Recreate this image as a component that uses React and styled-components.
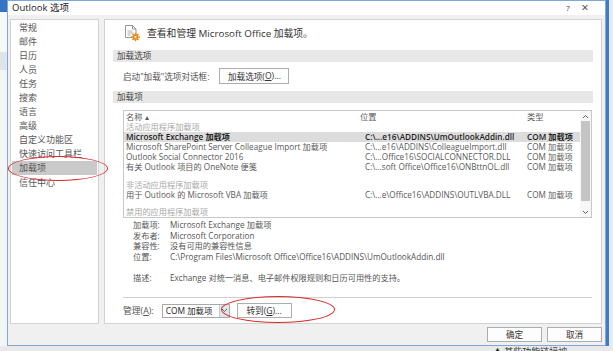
import React from "react";
import styled, { createGlobalStyle } from "styled-components";

const Global = createGlobalStyle`
  html, body { margin: 0; padding: 0; }
  body {
    width: 613px; height: 351px; overflow: hidden;
    font-family: "Open Sans", "Noto Sans CJK SC", sans-serif;
    color: #444; background: #e4e7eb;
  }
  * { box-sizing: border-box; }
`;

const Screen = styled.div`
  position: relative;
  width: 613px; height: 351px;
  display: flex; flex-direction: column;
  overflow: hidden;
`;

const Desk = styled.div`
  display: flex;
  height: 346px;
`;

const BgLeft = styled.div`
  width: 7px;
  display: flex; flex-direction: column;
  background: #f2f3f5;
`;

const BgBlue = styled.div`
  height: ${(p) => p.$h}px;
  background: ${(p) => p.$c || "#3474c4"};
`;

const BgRight = styled.div`
  flex: 1;
  display: flex;
  background: #e8ebee;
`;

const BgStripe = styled.div`
  width: 3px;
  background: #3f7cc8;
`;

const Dialog = styled.div`
  width: 599px;
  display: flex; flex-direction: column;
  background: #f0f0f0;
  border: 1px solid #7ea8d8;
`;

const TitleBar = styled.div`
  height: 14px;
  background: #fff;
  display: flex; align-items: center;
  padding: 0 10px 0 4px;
  font-size: 9.5px;
  color: #222;
`;

const Title = styled.span`
  flex: 1;
  line-height: 14px;
`;

const TitleBtn = styled.span`
  width: ${(p) => p.$w}px;
  text-align: center;
  font-size: ${(p) => p.$fs}px;
  color: #333;
  line-height: 14px;
`;

const Body = styled.div`
  display: flex;
  gap: 5px;
  padding: 4px 3px 0 2px;
  height: 309px;
`;

const Nav = styled.div`
  width: 89px;
  background: #fff;
  border: 1px solid #d2d2d2;
  padding: 1px 1px 0;
  display: flex; flex-direction: column;
`;

const NavItem = styled.div`
  height: 14px;
  line-height: ${(p) => (p.$active ? "13px" : "14px")};
  margin-bottom: ${(p) => (p.$active ? "1px" : "0")};
  padding-left: 7px;
  font-size: 9px;
  color: #555;
  background: ${(p) => (p.$active ? "#c9c9c9" : "transparent")};
`;

const Main = styled.div`
  flex: 1;
  background: #fff;
  border: 1px solid #d2d2d2;
  padding: 0 8px 0 8px;
  display: flex; flex-direction: column;
`;

const Header = styled.div`
  height: 26px;
  display: flex; align-items: center;
  gap: 6px;
  padding-left: 10px;
  margin-bottom: 4px;
  font-size: 9.8px;
  color: #333;
`;

const SectionBar = styled.div`
  height: 12px;
  line-height: 12px;
  background: #e7e7e7;
  padding-left: 4px;
  font-size: 8.6px;
  color: #444;
`;

const OptionRow = styled.div`
  display: flex; align-items: center;
  gap: 10px;
  padding: 6px 0 7px 10px;
  font-size: 8.6px;
  color: #555;
`;

const Button = styled.div`
  height: ${(p) => p.$h || 16}px;
  width: ${(p) => p.$w}px;
  margin-left: ${(p) => p.$ml || 0}px;
  display: flex; align-items: center; justify-content: center;
  border: 1px solid #adadad;
  background: #fdfdfd;
  font-size: 8.6px;
  color: #333;
  u { text-decoration: underline; }
`;

const List = styled.div`
  margin: 7px 1px 0 10px;
  height: 108px;
  border: 1px solid #c8c8c8;
  display: flex;
  overflow: hidden;
`;

const ListContent = styled.div`
  flex: 1;
  display: flex; flex-direction: column;
  overflow: hidden;
`;

const Row = styled.div`
  display: grid;
  grid-template-columns: 234px 167px 1fr;
  height: ${(p) => (p.$head ? 11 : 10)}px;
  line-height: ${(p) => (p.$head ? 11 : 10)}px;
  padding-left: 2px;
  font-size: 8.2px;
  white-space: nowrap;
  color: ${(p) => (p.$sel ? "#1e1e1e" : p.$group ? "#a8a8a8" : "#5a5a5a")};
  font-weight: ${(p) => (p.$sel ? 600 : 400)};
  background: ${(p) => (p.$sel ? "#dcdcdc" : "transparent")};
`;

const Cell = styled.span`
  overflow: hidden;
  padding-left: ${(p) => p.$pl || 0}px;
`;

const Scrollbar = styled.div`
  width: 11px;
  display: flex; flex-direction: column;
  background: #f7f7f7;
`;

const ScrollBtn = styled.div`
  height: 10px;
  display: flex; align-items: center; justify-content: center;
`;

const Thumb = styled.div`
  height: 80px;
  margin: 0 1px;
  background: #c4c4c4;
`;

const Track = styled.div`
  flex: 1;
`;

const Details = styled.div`
  margin: 2px 0 0 20px;
  display: grid;
  grid-template-columns: 37px 1fr;
  grid-auto-rows: 10.5px;
  line-height: 10.5px;
  font-size: 8.2px;
  color: #555;
  white-space: nowrap;
`;

const Sep = styled.div`
  margin: 14px 1px 0 10px;
  height: 1px;
  background: #d0d0d0;
`;

const ManageRow = styled.div`
  display: flex; align-items: center;
  margin: 5px 0 0 10px;
  height: 15px;
  font-size: 8.8px;
  color: #555;
  u { text-decoration: underline; }
`;

const Select = styled.div`
  margin-left: 8px;
  width: 68px; height: 14px;
  border: 1px solid #a8a8a8;
  display: flex;
  background: #fff;
`;

const SelectText = styled.span`
  flex: 1;
  padding-left: 3px;
  line-height: 12px;
  font-size: 8.4px;
  color: #222;
  white-space: nowrap;
  overflow: hidden;
`;

const SelectArrow = styled.span`
  width: 10px;
  background: #dfe6ee;
  border-left: 1px solid #c2cbd6;
  display: flex; align-items: center; justify-content: center;
`;

const Footer = styled.div`
  height: 21px;
  display: flex; justify-content: flex-end; align-items: flex-start;
  gap: 5px;
  padding: 3px 3px 0 0;
`;

const BgBottom = styled.div`
  height: 5px;
  background: #e9e9e9;
  display: flex;
  padding-left: 493px;
  overflow: hidden;
  font-size: 9px;
  line-height: 11px;
  color: #333;
  white-space: nowrap;
`;

const Ring = styled.div`
  position: absolute;
  left: ${(p) => p.$x}px; top: ${(p) => p.$y}px;
  width: ${(p) => p.$w}px; height: ${(p) => p.$h}px;
  border: 1.6px solid #dc2b2b;
  border-radius: 50%;
  pointer-events: none;
`;

const AddinIcon = () => (
  <svg width="18" height="18" viewBox="0 0 18 18">
    <path d="M2.5 1.5h7l3.5 3.5v8.5H2.5z" fill="#fff" stroke="#8a8a8a" strokeWidth="0.9" />
    <path d="M9.5 1.5v3.5h3.5" fill="none" stroke="#8a8a8a" strokeWidth="0.9" />
    <path d="M4.5 7h5M4.5 9h6M4.5 11h3" stroke="#9a9a9a" strokeWidth="0.8" />
    <g transform="translate(12.5 13)">
      <circle r="3" fill="#e88a1a" />
      <path d="M0-4.3v1.6M0 2.7v1.6M-4.3 0h1.6M2.7 0h1.6M-3-3l1.1 1.1M1.9 1.9L3 3M3-3L1.9-1.9M-1.9 1.9L-3 3" stroke="#e88a1a" strokeWidth="1.4" />
      <circle r="1.1" fill="#fff" />
    </g>
  </svg>
);

const Chevron = ({ up }) => (
  <svg width="7" height="5" viewBox="0 0 7 5">
    <path d={up ? "M1 4L3.5 1.5L6 4" : "M1 1L3.5 3.5L6 1"} fill="none" stroke="#606060" strokeWidth="1" />
  </svg>
);

const navItems = [
  "常规", "邮件", "日历", "人员", "任务", "搜索", "语言", "高级",
  "自定义功能区", "快速访问工具栏", "加载项", "信任中心",
];

const rows = [
  { g: true, n: "活动应用程序加载项" },
  { sel: true, n: "Microsoft Exchange 加载项", l: "C:\\...e16\\ADDINS\\UmOutlookAddin.dll", t: "COM 加载项" },
  { n: "Microsoft SharePoint Server Colleague Import 加载项", l: "C:\\...e16\\ADDINS\\ColleagueImport.dll", t: "COM 加载项" },
  { n: "Outlook Social Connector 2016", l: "C:\\...Office16\\SOCIALCONNECTOR.DLL", t: "COM 加载项" },
  { n: "有关 Outlook 项目的 OneNote 便笺", l: "C:\\...soft Office\\Office16\\ONBttnOL.dll", t: "COM 加载项" },
  { n: "" },
  { g: true, n: "非活动应用程序加载项" },
  { n: "用于 Outlook 的 Microsoft VBA 加载项", l: "C:\\...e\\Office16\\ADDINS\\OUTLVBA.DLL", t: "COM 加载项" },
  { n: "" },
  { g: true, n: "禁用的应用程序加载项" },
];

const details = [
  ["加载项:", "Microsoft Exchange 加载项"],
  ["发布者:", "Microsoft Corporation"],
  ["兼容性:", "没有可用的兼容性信息"],
  ["位置:", "C:\\Program Files\\Microsoft Office\\Office16\\ADDINS\\UmOutlookAddin.dll"],
  ["", ""],
  ["描述:", "Exchange 对统一消息、电子邮件权限规则和日历可用性的支持。"],
];

export default function App() {
  return (
    <Screen>
      <Global />
      <Desk>
        <BgLeft>
          <BgBlue $h={12} />
          <BgBlue $h={40} $c="#f7f8fa" />
          <BgBlue $h={18} $c="#dfe4ea" />
          <BgBlue $h={276} $c="#f4f5f7" />
        </BgLeft>
        <Dialog>
          <TitleBar>
            <Title>Outlook 选项</Title>
            <TitleBtn $w={14} $fs={8}>?</TitleBtn>
            <TitleBtn $w={20} $fs={12}>×</TitleBtn>
          </TitleBar>
          <Body>
            <Nav>
              {navItems.map((n) => (
                <NavItem key={n} $active={n === "加载项"}>{n}</NavItem>
              ))}
            </Nav>
            <Main>
              <Header>
                <AddinIcon />
                <span>查看和管理 Microsoft Office 加载项。</span>
              </Header>
              <SectionBar>加载选项</SectionBar>
              <OptionRow>
                <span>启动"加载"选项对话框:</span>
                <Button $w={70}>加载选项(<u>O</u>)...</Button>
              </OptionRow>
              <SectionBar>加载项</SectionBar>
              <List>
                <ListContent>
                  <Row $head>
                    <Cell>名称 ▴</Cell>
                    <Cell>位置</Cell>
                    <Cell>类型</Cell>
                  </Row>
                  {rows.map((r, i) => (
                    <Row key={i} $sel={r.sel} $group={r.g}>
                      <Cell>{r.n}</Cell>
                      <Cell $pl={5}>{r.l}</Cell>
                      <Cell>{r.t}</Cell>
                    </Row>
                  ))}
                </ListContent>
                <Scrollbar>
                  <ScrollBtn><Chevron up /></ScrollBtn>
                  <Thumb />
                  <Track />
                  <ScrollBtn><Chevron /></ScrollBtn>
                </Scrollbar>
              </List>
              <Details>
                {details.map(([k, v], i) => (
                  <React.Fragment key={i}>
                    <span>{k}</span>
                    <span>{v}</span>
                  </React.Fragment>
                ))}
              </Details>
              <Sep />
              <ManageRow>
                <span>管理(<u>A</u>):</span>
                <Select>
                  <SelectText>COM 加载项</SelectText>
                  <SelectArrow><Chevron /></SelectArrow>
                </Select>
                <Button $w={55} $h={15} $ml={7}>转到(<u>G</u>)...</Button>
              </ManageRow>
            </Main>
          </Body>
          <Footer>
            <Button $w={55} $h={15}>确定</Button>
            <Button $w={55} $h={15}>取消</Button>
          </Footer>
        </Dialog>
        <BgRight>
          <BgStripe />
        </BgRight>
      </Desk>
      <BgBottom>▲ 某些功能链接被</BgBottom>
      <Ring $x={8} $y={156} $w={100} $h={25} />
      <Ring $x={221} $y={296} $w={114} $h={27} />
    </Screen>
  );
}
